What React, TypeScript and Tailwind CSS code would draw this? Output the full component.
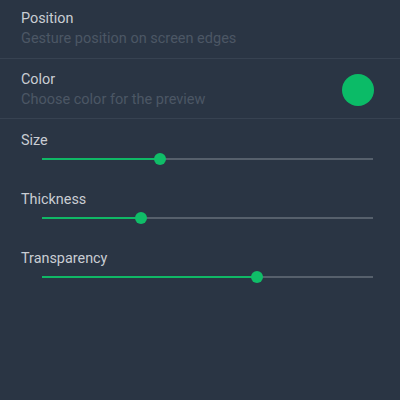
import React from "react";

function Slider({ label, pct }: { label: string; pct: number }) {
  return (
    <div className="flex flex-col">
      <div className="pl-[21px] pt-[1px] text-[14.4px] leading-[20px] text-[#c9cdd3]">{label}</div>
      <div className="relative h-[15px] ml-[42px] mr-[27px]">
        <div className="absolute left-0 right-0 top-[6.5px] h-[2px] bg-[#56606c]" />
        <div className="absolute left-0 top-[6.5px] h-[2px] bg-[#10b866]" style={{ width: `${pct}%` }} />
        <div
          className="absolute top-[1.5px] w-[12px] h-[12px] -ml-[6px] rounded-full bg-[#10bd68]"
          style={{ left: `${pct}%` }}
        />
      </div>
    </div>
  );
}

export default function App() {
  return (
    <div className="w-[400px] h-[400px] bg-[#2a3544] overflow-hidden" style={{ fontFamily: "Roboto, 'Noto Sans', sans-serif" }}>
      <div className="pt-[9px] pb-[9px] pl-[21px]">
        <div className="text-[14.4px] leading-[20px] text-[#c9cdd3]">Position</div>
        <div className="text-[14.5px] leading-[20px] text-[#4c5765]">Gesture position on screen edges</div>
      </div>
      <div className="h-px bg-[#374251]" />
      <div className="flex items-center justify-between pt-[11px] pb-[8px] pl-[21px] pr-[26px]">
        <div>
          <div className="text-[14.4px] leading-[20px] text-[#c9cdd3]">Color</div>
          <div className="text-[14.5px] leading-[20px] text-[#4c5765]">Choose color for the preview</div>
        </div>
        <div className="w-[32px] h-[32px] rounded-full bg-[#0bbb67]" />
      </div>
      <div className="h-px bg-[#374251]" />
      <div className="flex flex-col gap-[23px] pt-[11px]">
        <Slider label="Size" pct={35.6} />
        <Slider label="Thickness" pct={29.9} />
        <Slider label="Transparency" pct={65} />
      </div>
    </div>
  );
}
